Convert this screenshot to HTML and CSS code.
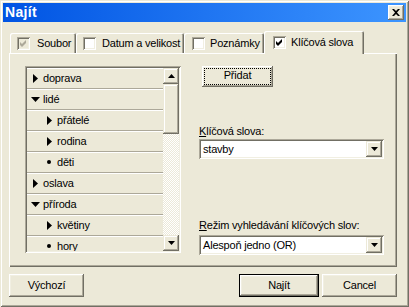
FILE: index.html
```html
<!DOCTYPE html>
<html lang="cs">
<head>
  <meta charset="UTF-8" />
  <title>Najít</title>
  <link rel="stylesheet" href="styles.css">
</head>
<body>

<div class="window">
  <div class="titlebar">
    <span class="title">Najít</span>
    <button class="close" aria-label="Zavřít">
      <svg width="8" height="7" viewBox="0 0 8 7"><path d="M0 0h2l2 2 2-2h2L5 3.5 8 7H6L4 5 2 7H0l3-3.5z" fill="#000"/></svg>
    </button>
  </div>

  <div class="body">
    <!-- Záložky -->
    <div class="tabs">
      <div class="tab tab-file">
        <span class="check check-disabled"><svg width="7" height="7" viewBox="0 0 7 7"><path d="M0 2l2 2 4-4v3L2 7 0 5z" fill="#aca899"/></svg></span>
        Soubor
      </div>
      <div class="tab tab-date"><span class="check"></span>Datum a velikost</div>
      <div class="tab tab-notes"><span class="check"></span>Poznámky</div>
      <div class="tab tab-keys active">
        <span class="check"><svg width="7" height="7" viewBox="0 0 7 7"><path d="M0 2l2 2 4-4v3L2 7 0 5z" fill="#000"/></svg></span>
        Klíčová slova
      </div>
    </div>

    <div class="panel">
      <div class="tree">
        <ul class="rows">
          <li class="row"><span class="icon"><svg width="5" height="9"><path d="M0 0l5 4.5L0 9z"/></svg></span>doprava</li>
          <li class="row"><span class="icon"><svg width="9" height="5"><path d="M0 0h9L4.5 5z"/></svg></span>lidé</li>
          <li class="row child"><span class="icon"><svg width="5" height="9"><path d="M0 0l5 4.5L0 9z"/></svg></span>přátelé</li>
          <li class="row child"><span class="icon"><svg width="5" height="9"><path d="M0 0l5 4.5L0 9z"/></svg></span>rodina</li>
          <li class="row child"><span class="icon"><span class="dot"></span></span>děti</li>
          <li class="row"><span class="icon"><svg width="5" height="9"><path d="M0 0l5 4.5L0 9z"/></svg></span>oslava</li>
          <li class="row"><span class="icon"><svg width="9" height="5"><path d="M0 0h9L4.5 5z"/></svg></span>příroda</li>
          <li class="row child"><span class="icon"><svg width="5" height="9"><path d="M0 0l5 4.5L0 9z"/></svg></span>květiny</li>
          <li class="row child"><span class="icon"><span class="dot"></span></span>hory</li>
        </ul>
        <div class="scrollbar">
          <div class="sb-btn"><svg width="7" height="4"><path d="M3.5 0L7 4H0z"/></svg></div>
          <div class="sb-thumb"></div>
          <div class="sb-track"></div>
          <div class="sb-btn"><svg width="7" height="4"><path d="M0 0h7L3.5 4z"/></svg></div>
        </div>
      </div>

      <div class="side">
        <button class="btn btn-add"><span>Přidat</span></button>

        <label class="label label-keys"><u>K</u>líčová slova:</label>
        <div class="combo">
          <span class="combo-text">stavby</span>
          <span class="combo-btn"><svg width="7" height="4"><path d="M0 0h7L3.5 4z"/></svg></span>
        </div>

        <label class="label label-mode"><u>R</u>ežim vyhledávání klíčových slov:</label>
        <div class="combo">
          <span class="combo-text">Alespoň jedno (OR)</span>
          <span class="combo-btn"><svg width="7" height="4"><path d="M0 0h7L3.5 4z"/></svg></span>
        </div>
      </div>
    </div>

    <div class="footer">
      <button class="btn">Výchozí</button>
      <div class="footer-right">
        <button class="btn btn-default">Najít</button>
        <button class="btn">Cancel</button>
      </div>
    </div>
  </div>
</div>

</body>
</html>
```

FILE: styles.css
```css
* { margin: 0; padding: 0; box-sizing: border-box; }

body {
  background: #ece9d8;
  font-family: "Liberation Sans", Arial, sans-serif;
  font-size: 11px;
  line-height: 13px;
  letter-spacing: -0.2px;
  color: #000;
}

button {
  font: inherit;
  color: inherit;
  letter-spacing: inherit;
  border: none;
  background: #ece9d8;
}

.window {
  width: 409px;
  height: 307px;
  padding: 3px;
  background: #ece9d8;
  box-shadow:
    inset 1px 1px #ece9d8,
    inset -1px -1px #716f64,
    inset 2px 2px #fff,
    inset -2px -2px #aca899;
}

/* Titulek okna */
.titlebar {
  height: 19px;
  display: flex;
  align-items: center;
  padding: 0 2px;
  background: linear-gradient(90deg, #0054e3, #3d95ff);
}

.title {
  color: #fff;
  font-weight: bold;
  font-size: 14px;
  line-height: 19px;
  letter-spacing: 0.3px;
}

.close {
  margin-left: auto;
  width: 16px;
  height: 15px;
  display: flex;
  align-items: center;
  justify-content: center;
  box-shadow:
    inset -1px -1px #716f64,
    inset 1px 1px #fff,
    inset -2px -2px #aca899,
    inset 2px 2px #f1efe2;
}

.body {
  padding: 9px 9px 0 6px;
}

/* Záložky */
.tabs {
  display: flex;
  align-items: flex-end;
  height: 22px;
  padding-left: 1px;
}

.tab {
  height: 20px;
  display: flex;
  align-items: center;
  gap: 7px;
  padding-left: 7px;
  white-space: nowrap;
  border-radius: 2px 2px 0 0;
  box-shadow:
    inset 1px 1px #fff,
    inset -1px 0 #716f64,
    inset -2px 0 #aca899;
}

.tab-file { width: 66px; }
.tab-date { width: 108px; gap: 6px; }
.tab-notes { width: 80px; padding-left: 8px; gap: 5px; }

.tab.active {
  width: 100px;
  height: 23px;
  padding-left: 9px;
  padding-bottom: 1px;
  gap: 5px;
  margin-bottom: -1px;
  position: relative;
  z-index: 1;
  background: #ece9d8;
  box-shadow:
    inset 1px 1px #fff,
    inset -1px 0 #716f64,
    inset -2px 0 #aca899;
}

.check {
  width: 13px;
  height: 13px;
  flex: none;
  display: flex;
  align-items: center;
  justify-content: center;
  background: #fff;
  box-shadow:
    inset 1px 1px #aca899,
    inset -1px -1px #fff,
    inset 2px 2px #716f64,
    inset -2px -2px #f1efe2;
}

.check-disabled { background: #ece9d8; }

/* Panel záložky */
.panel {
  height: 214px;
  display: flex;
  padding: 13px 0 0 16px;
  box-shadow:
    inset 1px 1px #fff,
    inset -1px -1px #716f64,
    inset -2px -2px #aca899;
}

.tree {
  width: 156px;
  height: 187px;
  display: flex;
  padding: 2px;
  overflow: hidden;
  box-shadow:
    inset 1px 1px #aca899,
    inset -1px -1px #fff,
    inset 2px 2px #716f64,
    inset -2px -2px #f1efe2;
}

.rows {
  list-style: none;
  width: 136px;
  height: 183px;
  overflow: hidden;
}

.row {
  height: 21px;
  display: flex;
  align-items: center;
  padding-left: 2px;
  border-bottom: 1px solid #aca899;
  box-shadow: inset 0 1px #fff;
}

.row.child { padding-left: 16px; }

.icon {
  width: 12px;
  margin-right: 2px;
  display: flex;
  align-items: center;
  justify-content: center;
}

.dot {
  width: 4px;
  height: 4px;
  border-radius: 50%;
  background: #000;
}

.scrollbar {
  width: 16px;
  display: flex;
  flex-direction: column;
}

.sb-btn,
.sb-thumb {
  height: 16px;
  flex: none;
  display: flex;
  align-items: center;
  justify-content: center;
  background: #ece9d8;
  box-shadow:
    inset -1px -1px #716f64,
    inset 1px 1px #ece9d8,
    inset -2px -2px #aca899,
    inset 2px 2px #fff;
}

.sb-thumb { height: 50px; }

.sb-track {
  flex: 1;
  background: repeating-conic-gradient(#fff 0 25%, #ece9d8 0 50%) 0 0 / 2px 2px;
}

/* Pravý sloupec */
.side {
  width: 185px;
  margin-left: 18px;
  display: flex;
  flex-direction: column;
  align-items: flex-start;
}

.btn {
  width: 75px;
  height: 23px;
  text-align: center;
  box-shadow:
    inset -1px -1px #716f64,
    inset 1px 1px #fff,
    inset -2px -2px #aca899,
    inset 2px 2px #f1efe2;
}

.btn-add {
  width: 71px;
  height: 21px;
  margin-left: 3px;
  padding: 3px;
}

.btn-add span {
  display: block;
  height: 100%;
  line-height: 13px;
  outline: 1px dotted #000;
}

.btn-default {
  width: 80px;
  border: 1px solid #000;
}

.label { display: block; }
.label-keys { margin-top: 38px; }
.label-mode { margin-top: 60px; }

.combo {
  width: 185px;
  height: 20px;
  margin-top: 1px;
  display: flex;
  align-items: center;
  padding: 2px;
  background: #fff;
  box-shadow:
    inset 1px 1px #aca899,
    inset -1px -1px #fff,
    inset 2px 2px #716f64,
    inset -2px -2px #f1efe2;
}

.label-mode + .combo { margin-top: 3px; }

.combo-text {
  flex: 1;
  padding-left: 2px;
}

.combo-btn {
  width: 16px;
  height: 16px;
  display: flex;
  align-items: center;
  justify-content: center;
  background: #ece9d8;
  box-shadow:
    inset -1px -1px #716f64,
    inset 1px 1px #ece9d8,
    inset -2px -2px #aca899,
    inset 2px 2px #fff;
}

/* Spodní tlačítka */
.footer {
  display: flex;
  justify-content: space-between;
  margin-top: 7px;
}

.footer-right {
  display: flex;
  gap: 3px;
}
```
